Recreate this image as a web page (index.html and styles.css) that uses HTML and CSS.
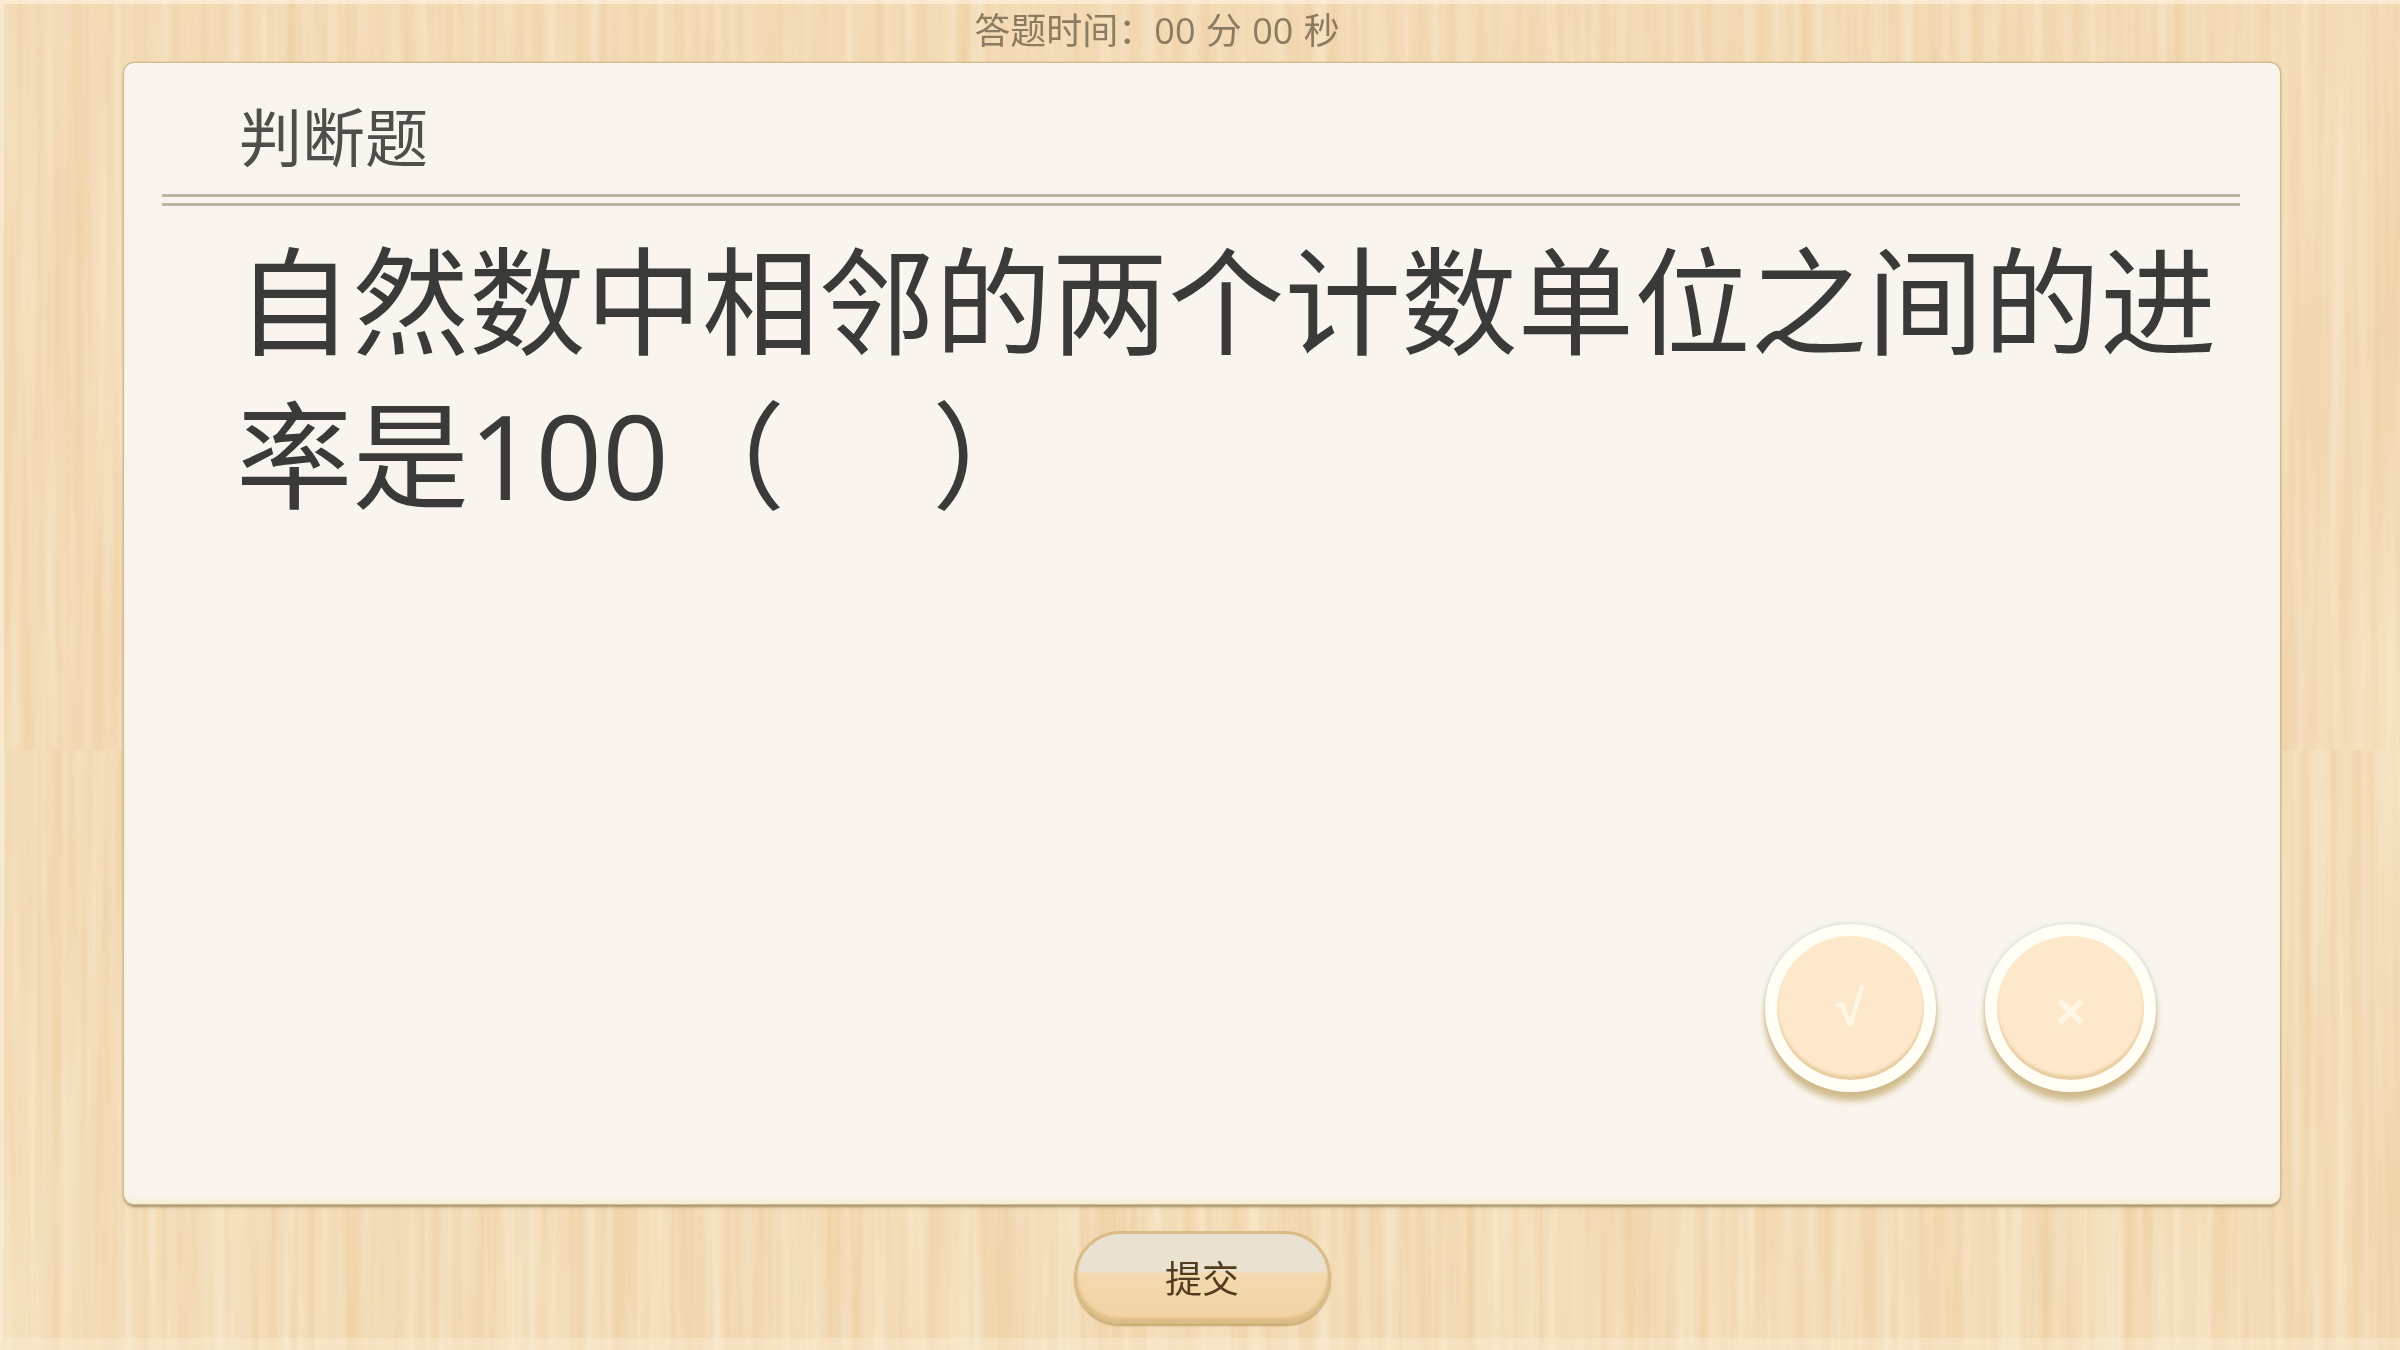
FILE: index.html
```html
<!DOCTYPE html>
<html lang="zh-CN">
<head>
<meta charset="utf-8">
<title>判断题</title>
<link rel="stylesheet" href="styles.css">
</head>
<body>
<svg class="wood" width="2400" height="1350" viewBox="0 0 2400 1350" aria-hidden="true">
  <defs>
    <filter id="grainA" x="0" y="0" width="100%" height="100%" color-interpolation-filters="sRGB">
      <feTurbulence type="fractalNoise" baseFrequency="0.07 0.002" numOctaves="4" seed="7"/>
      <feColorMatrix type="matrix" values="0.04 0 0 0 0.93  0.11 0 0 0 0.80  0.18 0 0 0 0.62  0 0 0 0 1"/>
    </filter>
    <filter id="grainB" x="0" y="0" width="100%" height="100%" color-interpolation-filters="sRGB">
      <feTurbulence type="fractalNoise" baseFrequency="0.08 0.002" numOctaves="4" seed="23"/>
      <feColorMatrix type="matrix" values="0.04 0 0 0 0.93  0.11 0 0 0 0.805  0.18 0 0 0 0.625  0 0 0 0 1"/>
    </filter>
  </defs>
  <rect class="plank" width="2400" height="750" filter="url(#grainA)"/>
  <rect class="plank" y="750" width="2400" height="600" filter="url(#grainB)"/>
</svg>
<main class="screen">
  <header class="timer">答题时间：00 分 00 秒</header>
  <section class="card">
    <div class="card-head">
      <h1 class="card-title">判断题</h1>
    </div>
    <p class="question">自然数中相邻的两个计数单位之间的进率是100（　&nbsp;）</p>
    <div class="answers">
      <button class="answer answer-true" type="button">√</button>
      <button class="answer answer-false" type="button">×</button>
    </div>
  </section>
  <footer class="actions">
    <button class="submit" type="button">提交</button>
  </footer>
</main>
</body>
</html>
```
FILE: styles.css
```css
* {
  box-sizing: border-box;
}

html,
body {
  margin: 0;
  padding: 0;
  width: 2400px;
  height: 1350px;
  overflow: hidden;
  background: #f3dcb9;
}

body {
  position: relative;
  font-family: "Open Sans", "Noto Sans CJK SC", sans-serif;
}

.wood {
  position: absolute;
  inset: 0;
  display: block;
}

.screen {
  position: relative;
  display: flex;
  flex-direction: column;
  width: 2400px;
  height: 1350px;
  filter: blur(0.7px);
  border-top: 4px solid rgba(255, 250, 235, 0.5);
  border-left: 4px solid rgba(255, 250, 235, 0.4);
  border-bottom: 12px solid rgba(255, 245, 225, 0.3);
}

.timer {
  display: flex;
  align-items: flex-start;
  justify-content: center;
  height: 59px;
  padding-top: 7px;
  padding-right: 90px;
  font-size: 36px;
  line-height: 1.1;
  color: #8b7b60;
  white-space: nowrap;
  word-spacing: 1px;
}

.card {
  display: flex;
  flex-direction: column;
  height: 1141px;
  margin: 0 120px 0 120px;
  background: #f9f5ee;
  border-radius: 10px;
  box-shadow:
    0 0 0 1px #d0ba8e,
    0 3px 3px rgba(125, 105, 65, 0.65),
    0 0 3px rgba(125, 105, 65, 0.5),
    inset 0 -5px 5px rgba(248, 236, 212, 0.9);
}

.card-head {
  height: 143px;
  margin: 0 40px 0 38px;
  padding: 32px 0 0 77px;
  border-bottom: 3px solid #b9b4a6;
  position: relative;
}

.card-head::after {
  content: "";
  display: block;
  position: absolute;
  left: 0;
  right: 0;
  bottom: 6px;
  height: 3px;
  background: #b9b4a6;
}

.card-title {
  margin: 0;
  font-size: 63px;
  font-weight: 400;
  line-height: 84px;
  color: #4f4e4a;
}

.question {
  flex: 1;
  margin: 0;
  padding: 18px 30px 0 112px;
  font-size: 116.5px;
  line-height: 154px;
  color: #3a3a38;
}

.answers {
  display: flex;
  justify-content: flex-end;
  gap: 49px;
  padding: 0 124px 112px 0;
}

.answer {
  display: flex;
  align-items: center;
  justify-content: center;
  width: 171px;
  height: 168px;
  padding: 0;
  border: 12px solid #fffdf4;
  border-radius: 50%;
  background: #fde8cb;
  font-family: "Liberation Sans", sans-serif;
  font-weight: 700;
  color: #fff6e6;
  box-shadow:
    0 9px 6px rgba(200, 175, 120, 0.8),
    0 0 4px rgba(170, 165, 150, 0.5),
    inset 0 -4px 3px rgba(225, 195, 145, 0.75);
}

.answer-true {
  font-size: 52px;
}

.answer-false {
  font-size: 52px;
  padding-top: 6px;
}

.actions {
  display: flex;
  justify-content: center;
  padding-top: 27px;
}

.submit {
  width: 257px;
  height: 93px;
  padding: 0 0 2px;
  border: 3px solid #d9bb86;
  border-radius: 46px;
  background: linear-gradient(to bottom, #e9e1d2 0, #eae1d0 42%, #f3d9ae 46%, #f1d4a3 100%);
  font-family: "Noto Sans CJK SC", sans-serif;
  font-size: 37px;
  color: #523c1e;
  box-shadow: 0 2px 2px rgba(180, 140, 80, 0.7), inset 0 -3px 3px rgba(205, 165, 105, 0.5);
}
```
